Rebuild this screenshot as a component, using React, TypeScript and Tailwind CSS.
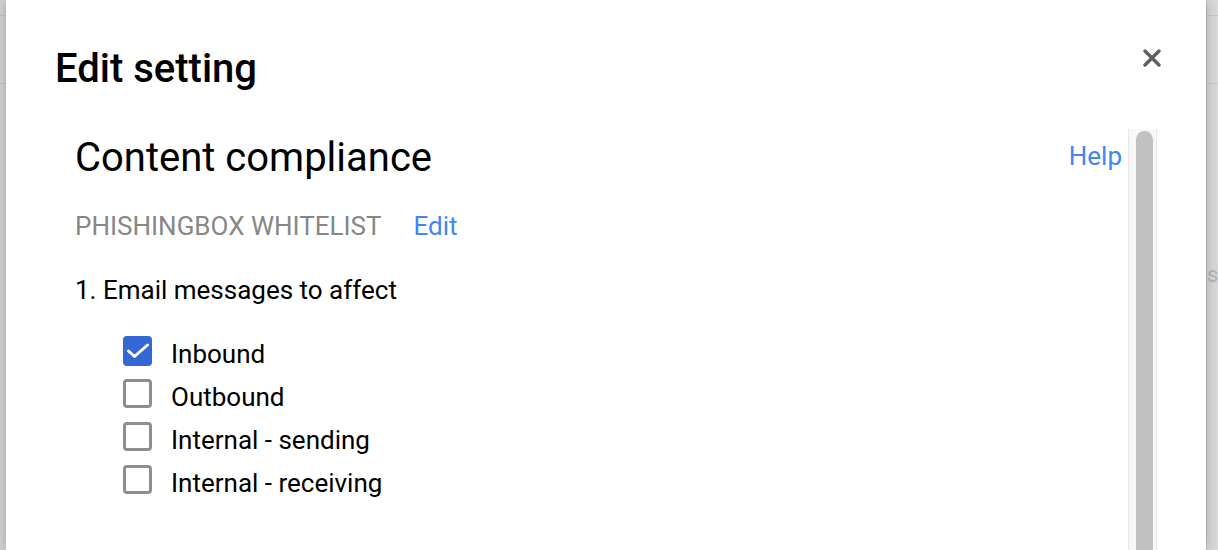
import React from 'react';

const OPTIONS = [
  { id: 'inbound', label: 'Inbound', checked: true },
  { id: 'outbound', label: 'Outbound', checked: false },
  { id: 'internal-sending', label: 'Internal - sending', checked: false },
  { id: 'internal-receiving', label: 'Internal - receiving', checked: false },
];

function Checkbox({ checked }: { checked: boolean }) {
  if (checked) {
    return (
      <span className="mt-[-5px] w-[29px] h-[30px] rounded-[4px] bg-[#3367d6] flex items-center justify-center shrink-0">
        <svg width="22" height="16" viewBox="0 0 22 16" fill="none">
          <path d="M1.5 8 L7.5 13.5 L20.5 2" stroke="white" strokeWidth="3" strokeLinecap="round" strokeLinejoin="round" />
        </svg>
      </span>
    );
  }
  return <span className="mt-[-5px] w-[29px] h-[29px] rounded-[4px] border-[3px] border-[#8e8e8e] bg-white shrink-0" />;
}

export default function App() {
  return (
    <div className="w-[1218px] h-[550px] flex overflow-hidden bg-[#d6d6d6] font-['Roboto',sans-serif]">
      {/* backdrop strip, left */}
      <div className="w-[6px] shrink-0 flex flex-col bg-[#d4d4d4]">
        <div className="h-[15px]" />
        <div className="h-px bg-[#c4c4c4]" />
        <div className="h-[67px]" />
        <div className="h-px bg-[#c4c4c4]" />
      </div>

      {/* dialog */}
      <div className="w-[1200px] shrink-0 h-full bg-white flex flex-col shadow-[0_0_12px_rgba(0,0,0,0.25)] relative">
        <div className="flex items-start justify-between pl-[49px] pr-[45px]">
          <h1 className="mt-[49px] text-[40px] leading-none font-medium text-[#000]">Edit setting</h1>
          <button className="mt-[49px]">
            <svg width="18" height="18" viewBox="0 0 18 18" fill="none">
              <path d="M2 2 L16 16 M16 2 L2 16" stroke="#5f5f5f" strokeWidth="3.4" strokeLinecap="round" />
            </svg>
          </button>
        </div>

        <div className="flex flex-1 mt-[49px] pl-[69px] pr-[49px]">
          <div className="flex-1 flex flex-col pr-[6px]">
            <div className="flex items-start justify-between">
              <h2 className="text-[40px] leading-none text-[#000]">Content compliance</h2>
              <a className="mt-[5px] text-[26px] leading-none text-[#4285f4]">Help</a>
            </div>

            <div className="flex items-baseline gap-[32px] mt-[35px]">
              <span className="text-[26px] leading-none text-[#878787] uppercase">Phishingbox whitelist</span>
              <a className="text-[26px] leading-none text-[#4285f4]">Edit</a>
            </div>

            <p className="mt-[38px] text-[26px] leading-none text-[#000]">1. Email messages to affect</p>

            <ul className="mt-[38px] pl-[48px] flex flex-col gap-[17px]">
              {OPTIONS.map((opt) => (
                <li key={opt.id} className="flex items-start gap-[19px]">
                  <Checkbox checked={opt.checked} />
                  <span className="text-[26px] leading-none text-[#000]">{opt.label}</span>
                </li>
              ))}
            </ul>
          </div>

          {/* scrollbar */}
          <div className="w-[29px] mt-[-9px] bg-[#f7f7f7] border-x border-[#e6e6e6] flex pl-[7px] pt-[2px]">
            <div className="w-[17px] h-[600px] rounded-t-full bg-[#c1c1c1]" />
          </div>
        </div>
      </div>

      {/* backdrop strip, right */}
      <div className="flex-1 min-w-0 flex flex-col bg-[#d9d9d9] border-l border-[#c8c8c8] overflow-hidden">
        <div className="h-[15px]" />
        <div className="h-px bg-[#c8c8c8]" />
        <div className="h-[67px]" />
        <div className="h-px bg-[#c8c8c8]" />
        <span className="mt-[180px] text-[22px] leading-none text-[#b5b5b5] whitespace-nowrap">ss</span>
      </div>
    </div>
  );
}
